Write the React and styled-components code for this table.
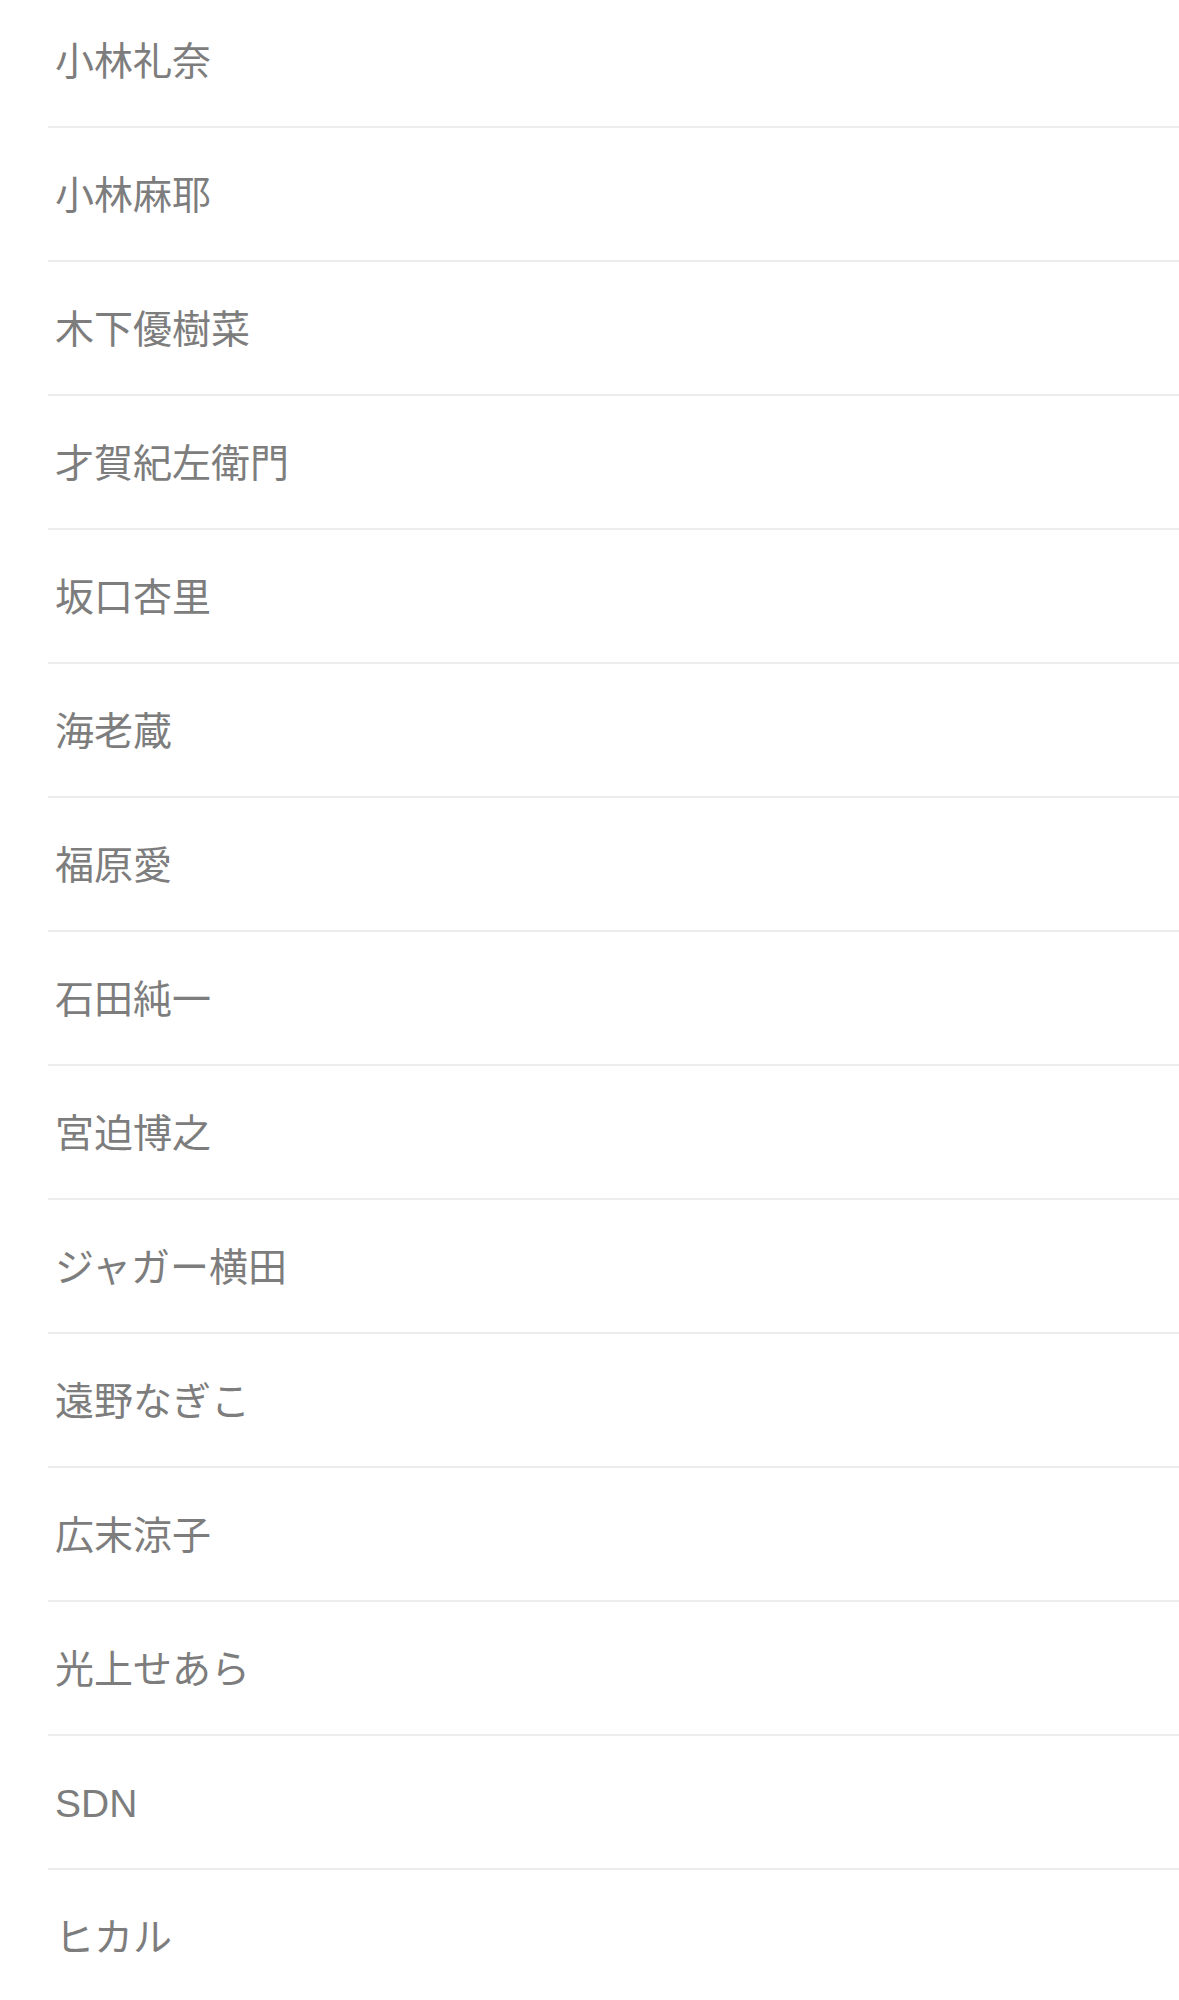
import React from "react";
import styled, { createGlobalStyle } from "styled-components";

const GlobalStyle = createGlobalStyle`
  html, body {
    margin: 0;
    padding: 0;
    background: #ffffff;
  }
  body {
    font-family: "Liberation Sans", "Noto Sans CJK JP", sans-serif;
    overflow: hidden;
  }
`;

const names = [
  "小林礼奈",
  "小林麻耶",
  "木下優樹菜",
  "才賀紀左衛門",
  "坂口杏里",
  "海老蔵",
  "福原愛",
  "石田純一",
  "宮迫博之",
  "ジャガー横田",
  "遠野なぎこ",
  "広末涼子",
  "光上せあら",
  "SDN",
  "ヒカル",
];

const List = styled.ul`
  list-style: none;
  margin: -6px 0 0 0;
  padding: 0 0 0 48px;
  height: 2006px;
  overflow: hidden;
`;

const Row = styled.li`
  display: flex;
  align-items: center;
  height: 132px;
  padding-left: 7px;
  border-bottom: 2px solid #ededed;
`;

const Name = styled.span`
  font-size: 39px;
  line-height: 1;
  color: #7d7d7d;
  padding-top: 2px;
`;

function App() {
  return (
    <>
      <GlobalStyle />
      <List>
        {names.map((name) => (
          <Row key={name}>
            <Name>{name}</Name>
          </Row>
        ))}
      </List>
    </>
  );
}

export default App;
